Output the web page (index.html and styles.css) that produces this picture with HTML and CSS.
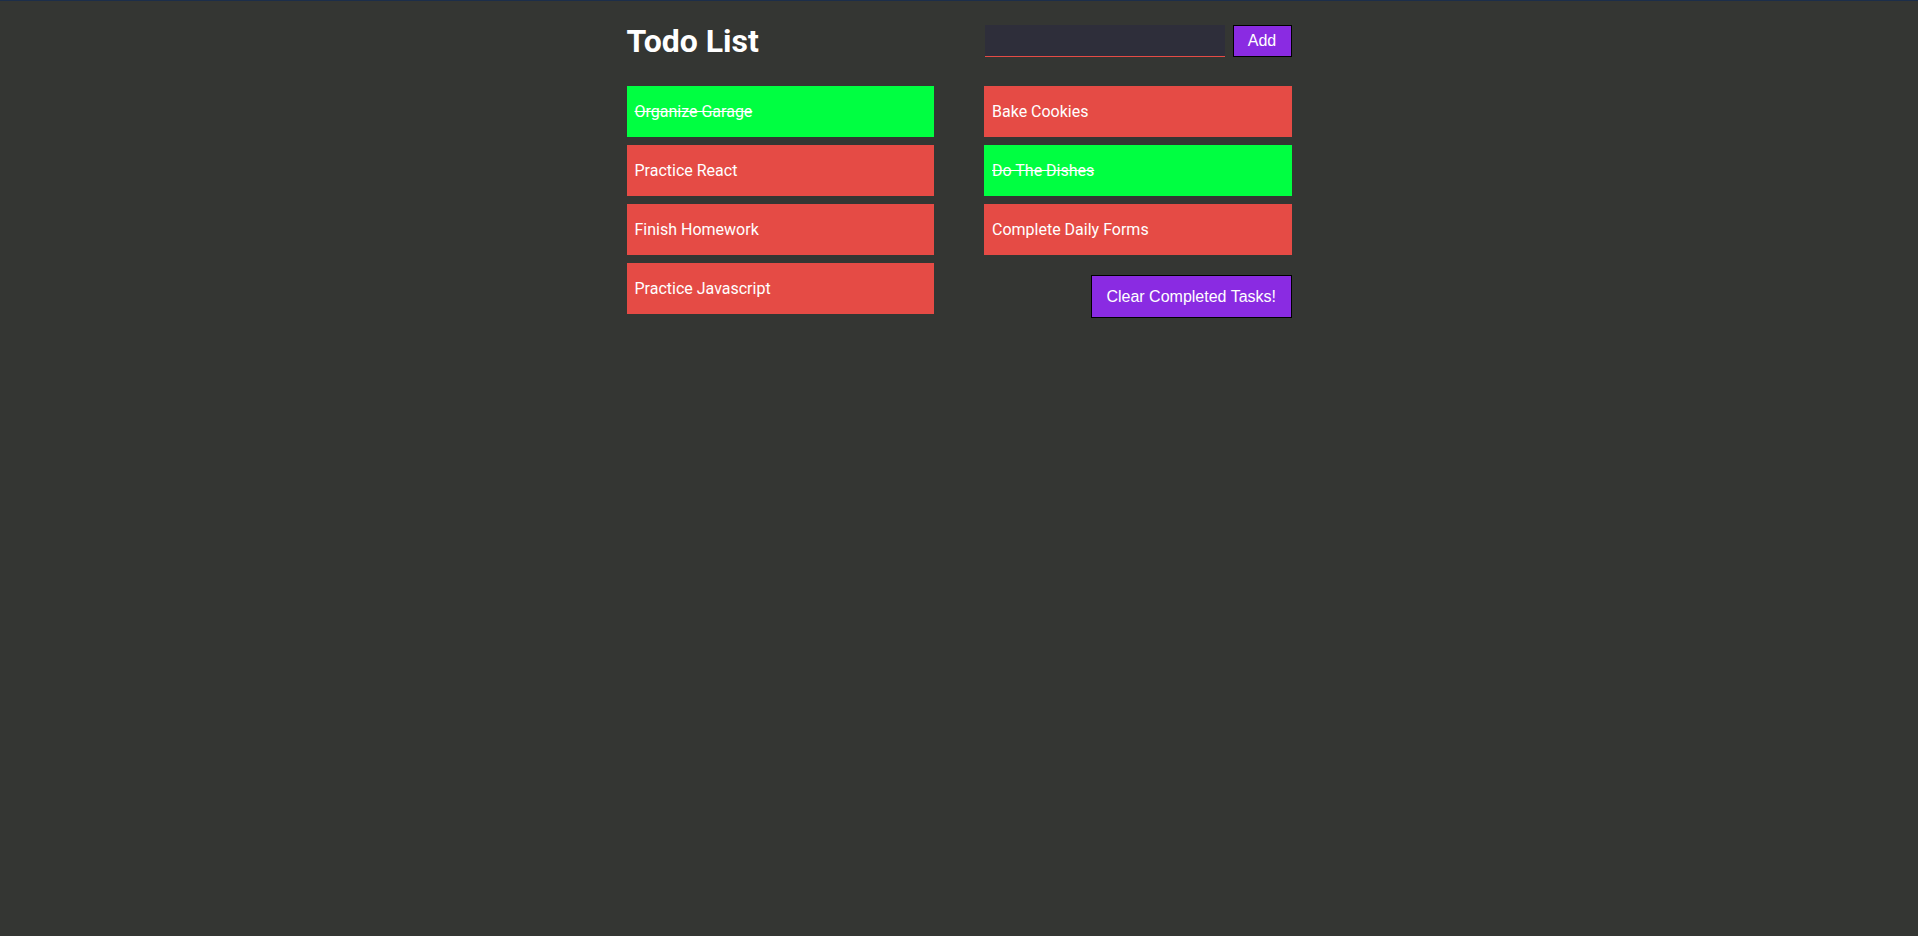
FILE: index.html
```html
<!DOCTYPE html>
<html lang="en">
<head>
<meta charset="utf-8">
<title>Todo List</title>
<link rel="stylesheet" href="styles.css">
</head>
<body>
<div class="app">
  <div class="header">
    <h1 class="title">Todo List</h1>
    <form class="add-form">
      <input class="add-input" type="text">
      <button class="add-btn" type="button">Add</button>
    </form>
  </div>
  <div class="lists">
    <div class="column">
      <div class="todo done">Organize Garage</div>
      <div class="todo">Practice React</div>
      <div class="todo">Finish Homework</div>
      <div class="todo">Practice Javascript</div>
    </div>
    <div class="column">
      <div class="todo">Bake Cookies</div>
      <div class="todo done">Do The Dishes</div>
      <div class="todo">Complete Daily Forms</div>
      <button class="clear-btn" type="button">Clear Completed Tasks!</button>
    </div>
  </div>
</div>
</body>
</html>
```
FILE: styles.css
```css
html, body {
  margin: 0;
  padding: 0;
}
body {
  background: #343633;
  border-top: 1px solid #1c2e4a;
  font-family: Roboto, "Liberation Sans", sans-serif;
  color: #fff;
  min-height: 935px;
}
.app {
  width: 665px;
  margin: 0 auto;
  padding-top: 24px;
}
.header {
  display: grid;
  grid-template-columns: 1fr 1fr;
  column-gap: 50px;
  align-items: center;
  height: 32px;
}
.title {
  margin: 0;
  font-size: 32px;
  line-height: 32px;
  font-weight: 700;
  color: #fff;
}
.add-form {
  display: flex;
  gap: 8px;
  height: 32px;
  margin-left: 1px;
}
.add-input {
  flex: 1;
  min-width: 0;
  box-sizing: border-box;
  height: 32px;
  background: #2e2e3a;
  border: none;
  border-bottom: 1px solid #e54b45;
  outline: none;
  color: #fff;
  padding: 0 8px;
  font-family: Roboto, sans-serif;
  font-size: 16px;
}
.add-btn {
  width: 59px;
  box-sizing: border-box;
  background: #8a2be2;
  border: 1px solid #000;
  color: #fff;
  font-family: "Liberation Sans", Arial, sans-serif;
  font-size: 16px;
  padding: 0;
}
.lists {
  display: grid;
  grid-template-columns: 1fr 1fr;
  column-gap: 50px;
  margin-top: 29px;
  align-items: start;
}
.column {
  display: flex;
  flex-direction: column;
  gap: 8px;
}
.todo {
  background: #e54b45;
  padding: 16px 8px;
  font-size: 16px;
  line-height: 19px;
  color: #fff;
}
.todo.done {
  background: #00ff41;
  text-decoration: line-through;
}
.clear-btn {
  align-self: flex-end;
  margin-top: 12px;
  background: #8a2be2;
  border: 1px solid #000;
  color: #fff;
  font-family: "Liberation Sans", Arial, sans-serif;
  font-size: 16px;
  line-height: 19px;
  padding: 11px 14.5px;
}
```
